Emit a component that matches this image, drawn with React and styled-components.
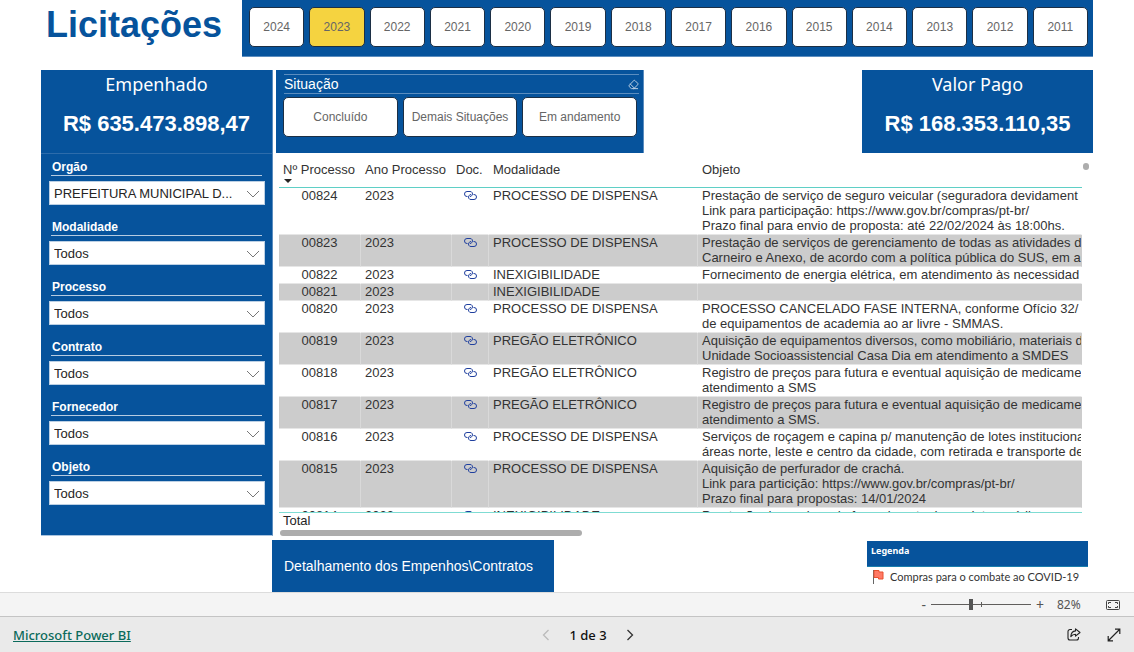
import React, { useState } from 'react';
import styled, { createGlobalStyle } from 'styled-components';
import { Eraser } from 'lucide-react';

const blue = '#06539c';
const arial = '"Liberation Sans", Arial, sans-serif';
const segoe = '"Noto Sans", "Segoe UI", sans-serif';

const GlobalStyle = createGlobalStyle`
  * { box-sizing: border-box; }
  body { margin: 0; background: #fff; font-family: ${arial}; color: #333; }
  button, select, input { font-family: inherit; margin: 0; }
`;

const Page = styled.div`
  display: flex;
  flex-direction: column;
  min-height: 100vh;
`;

const Report = styled.main`
  flex: 1;
`;

const Header = styled.header`
  display: flex;
  padding: 0 41px 0 46px;
`;

const Title = styled.h1`
  width: 196px;
  margin: 0;
  padding-top: 4px;
  font-size: 36px;
  line-height: 41px;
  color: ${blue};
`;

const YearBar = styled.div`
  flex: 1;
  display: flex;
  gap: 5px;
  padding: 7px 5px 9px 7px;
  background: ${blue};
  border-bottom: 1px solid #5b8dbf;
`;

const Tile = styled.button`
  flex: 1;
  min-width: 0;
  height: 40px;
  padding: 0;
  border: 1px solid #1c2f45;
  border-radius: 5px;
  background: ${(props) => (props.$active ? '#f5d340' : '#fff')};
  color: #666;
  font-size: 12px;
  white-space: nowrap;
  cursor: pointer;
`;

const Body = styled.div`
  display: grid;
  grid-template-columns: 232px minmax(0, 1fr);
  gap: 3px;
  padding: 13px 41px 4px;
`;

const Sidebar = styled.aside`
  background: ${blue};
  border-right: 1px solid #5b8dbf;
  border-bottom: 1px solid #a9c4df;
`;

const Card = styled.section`
  width: ${(props) => props.$width || 'auto'};
  height: 83px;
  background: ${blue};
  color: #fff;
  text-align: center;
`;

const CardLabel = styled.h2`
  margin: 0;
  padding-top: 2px;
  font: 400 18px/24px ${segoe};
`;

const CardValue = styled.div`
  padding-top: 15px;
  font-size: 22px;
  line-height: 26px;
  font-weight: bold;
`;

const Filters = styled.div`
  display: flex;
  flex-direction: column;
  gap: 15px;
  padding: 6px 7px 0 8px;
  border-top: 1px solid #2d6cab;
`;

const FilterLabel = styled.label`
  display: block;
  height: 16px;
  margin: 0 3px 5px 2px;
  padding-left: 1px;
  border-bottom: 1px solid #b5cbe1;
  color: #fff;
  font-size: 12px;
  line-height: 14px;
  font-weight: bold;
`;

const SelectBox = styled.div`
  position: relative;

  svg {
    position: absolute;
    right: 5px;
    top: 9px;
    pointer-events: none;
  }
`;

const Select = styled.select`
  display: block;
  width: 100%;
  height: 24px;
  padding: 0 24px 0 4px;
  appearance: none;
  border: 1px solid #bcd0e4;
  border-radius: 0;
  background: #fff;
  color: #252423;
  font-size: 13px;
`;

const Content = styled.div`
  display: flex;
  flex-direction: column;
  min-width: 0;
`;

const TopRow = styled.div`
  display: flex;
  justify-content: space-between;
`;

const Situation = styled.section`
  width: 368px;
  height: 83px;
  padding: 4px 4px 0 7px;
  background: ${blue};
  border-right: 1px solid #5b8dbf;
`;

const SituationHead = styled.div`
  display: flex;
  justify-content: space-between;
  height: 20px;
  margin-left: 1px;
  border-top: 1px solid #5b8dbf;
  border-bottom: 1px solid #5b8dbf;
`;

const SituationTitle = styled.h2`
  margin: 0;
  color: #fff;
  font-size: 14px;
  line-height: 19px;
  font-weight: 400;
`;

const IconButton = styled.button`
  display: flex;
  align-items: center;
  justify-content: center;
  padding: 0;
  border: 0;
  background: none;
  color: ${(props) => props.$color || '#333'};
  cursor: pointer;
`;

const Tiles = styled.div`
  display: flex;
  gap: 5px;
  padding: 3px 2px 0 0;
`;

const TableArea = styled.div`
  display: flex;
  align-items: flex-start;
  gap: 1px;
  padding: 1px 4px 0 3px;
`;

const TableBox = styled.div`
  flex: 1;
  min-width: 0;
`;

const TableView = styled.div`
  height: 359px;
  overflow: hidden;
  border-bottom: 1px solid #7fdcd3;
`;

const Table = styled.table`
  width: 100%;
  table-layout: fixed;
  border-collapse: separate;
  border-spacing: 0;
  font-size: 13px;
  line-height: 15px;
`;

const Th = styled.th`
  width: ${(props) => props.$width || 'auto'};
  height: 34px;
  padding: 8px 0 0 4px;
  border-bottom: 1px solid #5fcfc6;
  font-weight: 400;
  text-align: left;
  vertical-align: top;
  white-space: nowrap;
`;

const SortArrow = styled.svg`
  display: block;
  margin: 2px 0 0 1px;
`;

const Tr = styled.tr`
  background: ${(props) => (props.$shade ? '#ccc' : '#fff')};
`;

const Td = styled.td`
  height: 17px;
  padding: 0 ${(props) => (props.$center ? '4px' : '0')} 1px 4px;
  border-bottom: 1px solid #e6e6e6;
  border-right: 1px solid ${(props) => (props.$last ? 'transparent' : props.$shade ? '#d9d9d9' : '#fff')};
  overflow: hidden;
  text-align: ${(props) => (props.$center ? 'center' : 'left')};
  vertical-align: top;
  white-space: pre;
`;

const DocLink = styled.a`
  display: inline-block;
  color: #1f3f9e;

  svg { display: block; margin-top: 3px; }
`;

const Total = styled.div`
  padding-left: 4px;
  font-size: 13px;
  line-height: 15px;
  color: #252423;
`;

const HorizontalBar = styled.div`
  width: 302px;
  height: 6px;
  margin: 2px 0 0 1px;
  border-radius: 3px;
  background: #adadad;
`;

const ScrollDot = styled.div`
  width: 6px;
  height: 7px;
  margin-top: 9px;
  border-radius: 3px;
  background: #adadad;
`;

const BottomRow = styled.div`
  display: flex;
  justify-content: space-between;
  padding: 0 46px 0 272px;
`;

const DetailButton = styled.button`
  width: 282px;
  height: 52px;
  padding: 0 0 0 12px;
  border: 0;
  background: ${blue};
  color: #fff;
  font-size: 14px;
  text-align: left;
  cursor: pointer;
`;

const Legend = styled.section`
  width: 221px;
  padding-top: 1px;
`;

const LegendTitle = styled.h2`
  height: 26px;
  margin: 0;
  padding: 3px 4px;
  background: ${blue};
  border-bottom: 1px solid #1a7fae;
  color: #fff;
  font: 700 9px/13px ${segoe};
`;

const LegendItem = styled.div`
  display: flex;
  align-items: center;
  gap: 6px;
  padding: 2px 0 0 5px;
  font: 400 11px/16px Lato, sans-serif;
  white-space: nowrap;
`;

const ZoomBar = styled.div`
  display: flex;
  align-items: center;
  justify-content: flex-end;
  height: 24px;
  padding-right: 14px;
  border-top: 1px solid #dcdcdc;
  background: #f4f4f4;
  color: #555;
  font: 400 12px/16px ${segoe};
`;

const ZoomSign = styled.span`
  font-size: 14px;
`;

const ZoomSlider = styled.input`
  && {
    width: 100px;
    height: 13px;
    margin: 0 5px;
  }
  appearance: none;
  background:
    linear-gradient(#605e5c, #605e5c) 50px 4px / 1px 5px no-repeat,
    linear-gradient(#605e5c, #605e5c) 0 6px / 100% 1px no-repeat;

  &::-webkit-slider-thumb {
    appearance: none;
    width: 4px;
    height: 11px;
    background: #555;
  }
`;

const ZoomValue = styled.span`
  width: 49px;
  padding-left: 13px;
  margin-right: 13px;
`;

const Footer = styled.footer`
  display: grid;
  grid-template-columns: 1fr auto 1fr;
  align-items: center;
  height: 36px;
  padding: 0 13px;
  border-top: 1px solid #c4c4c4;
  background: #eaeaea;
  font: 500 13px/18px ${segoe};
`;

const BrandLink = styled.a`
  justify-self: start;
  color: #0b6a5b;
  text-decoration: underline;
`;

const Pager = styled.nav`
  display: flex;
  align-items: center;
  gap: 19px;
  padding-left: 42px;
  color: #111;
`;

const Actions = styled.div`
  display: flex;
  justify-content: flex-end;
  gap: 26px;
`;

const years = [2024, 2023, 2022, 2021, 2020, 2019, 2018, 2017, 2016, 2015, 2014, 2013, 2012, 2011];

const filters = [
  { id: 'orgao', name: 'Orgão', value: 'PREFEITURA MUNICIPAL D...' },
  { id: 'modalidade', name: 'Modalidade', value: 'Todos' },
  { id: 'processo', name: 'Processo', value: 'Todos' },
  { id: 'contrato', name: 'Contrato', value: 'Todos' },
  { id: 'fornecedor', name: 'Fornecedor', value: 'Todos' },
  { id: 'objeto', name: 'Objeto', value: 'Todos' },
];

const rows = [
  {
    id: '00824', type: 'PROCESSO DE DISPENSA', doc: true,
    text: 'Prestação de serviço de seguro veicular (seguradora devidament\nLink para participação: https://www.gov.br/compras/pt-br/\nPrazo final para envio de proposta: até 22/02/2024 às 18:00hs.',
  },
  {
    id: '00823', type: 'PROCESSO DE DISPENSA', doc: true,
    text: 'Prestação de serviços de gerenciamento de todas as atividades d\nCarneiro e Anexo, de acordo com a política pública do SUS, em a',
  },
  { id: '00822', type: 'INEXIGIBILIDADE', doc: true, text: 'Fornecimento de energia elétrica, em atendimento às necessidad' },
  { id: '00821', type: 'INEXIGIBILIDADE', doc: false, text: '' },
  {
    id: '00820', type: 'PROCESSO DE DISPENSA', doc: true,
    text: 'PROCESSO CANCELADO FASE INTERNA, conforme Ofício 32/\nde equipamentos de academia ao ar livre - SMMAS.',
  },
  {
    id: '00819', type: 'PREGÃO ELETRÔNICO', doc: true,
    text: 'Aquisição de equipamentos diversos, como mobiliário, materiais d\nUnidade Socioassistencial Casa Dia em atendimento a SMDES',
  },
  {
    id: '00818', type: 'PREGÃO ELETRÔNICO', doc: true,
    text: 'Registro de preços para futura e eventual aquisição de medicame\natendimento a SMS',
  },
  {
    id: '00817', type: 'PREGÃO ELETRÔNICO', doc: true,
    text: 'Registro de preços para futura e eventual aquisição de medicame\natendimento a SMS.',
  },
  {
    id: '00816', type: 'PROCESSO DE DISPENSA', doc: true,
    text: 'Serviços de roçagem e capina p/ manutenção de lotes instituciona\náreas norte, leste e centro da cidade, com retirada e transporte de',
  },
  {
    id: '00815', type: 'PROCESSO DE DISPENSA', doc: true,
    text: 'Aquisição de perfurador de crachá.\nLink para particição: https://www.gov.br/compras/pt-br/\nPrazo final para propostas: 14/01/2024',
  },
  { id: '00814', type: 'INEXIGIBILIDADE', doc: true, text: 'Prestação de serviços de fornecimento de produtos médicos' },
];

const Chevron = () => (
  <svg width="14" height="8" viewBox="0 0 14 8" fill="none" stroke="#777" strokeWidth="1">
    <path d="M1 1l6 6 6-6" />
  </svg>
);

const ChainIcon = () => (
  <svg width="13" height="9" viewBox="0 0 13 9" fill="none" stroke="currentColor" strokeWidth="1">
    <path d="M3.500 5.500H3A2.500 2.500 0 0 1 3 .5H6A2.300 2.300 0 0 1 8 4.200Q7.500 5.500 6 5.500" />
    <path d="M9.500 3.500H10A2.500 2.500 0 0 1 10 8.500H7A2.300 2.300 0 0 1 5 4.800Q5.500 3.500 7 3.500" />
  </svg>
);

const FlagIcon = () => (
  <svg width="12" height="14" viewBox="0 0 12 14">
    <path d="M1.5 0v14" stroke="#666" strokeWidth="1" />
    <path d="M2 .5h5v1.5h4v7H6.5V7.500H2z" fill="#ff7a66" stroke="#e8502f" strokeWidth="1" />
  </svg>
);

const FitIcon = () => (
  <svg width="14" height="10" viewBox="0 0 14 10" fill="none" stroke="currentColor" strokeWidth="1">
    <rect x=".5" y=".5" width="13" height="9" rx="1" />
    <path d="M5 2.500H2.500V4M2.500 6v1.500H5M9 2.500h2.500V4M11.500 6v1.500H9" />
  </svg>
);

const ShareIcon = () => (
  <svg width="14" height="13" viewBox="0 0 14 13" fill="none" stroke="currentColor" strokeWidth="1.1" strokeLinejoin="round">
    <path d="M5 1.500H3A2 2 0 0 0 1 3.500V10a2 2 0 0 0 2 2h6.500a2 2 0 0 0 2-2V9" />
    <path d="M8.500 .8L13 4.500 8.500 8.200V6.200C6.300 6.200 5 7 3.800 8.600 4 5.500 5.600 3.200 8.500 2.900z" />
  </svg>
);

const ExpandIcon = () => (
  <svg width="14" height="14" viewBox="0 0 14 14" fill="none" stroke="currentColor" strokeWidth="1.200">
    <path d="M1.500 12.500l11-11M8 1.200h4.800V6M1.200 8v4.800H6" />
  </svg>
);

const PageArrow = ({ d }) => (
  <svg width="8" height="12" viewBox="0 0 8 12" fill="none" stroke="currentColor" strokeWidth="1.300">
    <path d={d} />
  </svg>
);

function App() {
  const [year, setYear] = useState(2023);
  const [zoom, setZoom] = useState(82);

  return (
    <Page>
      <GlobalStyle />
      <Report>
        <Header>
          <Title>Licitações</Title>
          <YearBar>
            {years.map((y) => (
              <Tile key={y} $active={y === year} onClick={() => setYear(y)}>{y}</Tile>
            ))}
          </YearBar>
        </Header>

        <Body>
          <Sidebar>
            <Card>
              <CardLabel>Empenhado</CardLabel>
              <CardValue>R$ 635.473.898,47</CardValue>
            </Card>
            <Filters>
              {filters.map((f) => (
                <div key={f.id}>
                  <FilterLabel htmlFor={f.id}>{f.name}</FilterLabel>
                  <SelectBox>
                    <Select id={f.id}>
                      <option>{f.value}</option>
                    </Select>
                    <Chevron />
                  </SelectBox>
                </div>
              ))}
            </Filters>
          </Sidebar>

          <Content>
            <TopRow>
              <Situation>
                <SituationHead>
                  <SituationTitle>Situação</SituationTitle>
                  <IconButton $color="#c8d8e8" aria-label="Limpar seleções">
                    <Eraser size={11} strokeWidth={2} />
                  </IconButton>
                </SituationHead>
                <Tiles>
                  <Tile>Concluído</Tile>
                  <Tile>Demais Situações</Tile>
                  <Tile>Em andamento</Tile>
                </Tiles>
              </Situation>
              <Card $width="231px">
                <CardLabel>Valor Pago</CardLabel>
                <CardValue>R$ 168.353.110,35</CardValue>
              </Card>
            </TopRow>

            <TableArea>
              <TableBox>
                <TableView>
                  <Table>
                    <thead>
                      <tr>
                        <Th $width="82px">
                          Nº Processo
                          <SortArrow width="8" height="4" viewBox="0 0 8 4">
                            <path d="M0 0h8L4 4z" fill="#252423" />
                          </SortArrow>
                        </Th>
                        <Th $width="91px">Ano Processo</Th>
                        <Th $width="37px">Doc.</Th>
                        <Th $width="209px">Modalidade</Th>
                        <Th>Objeto</Th>
                      </tr>
                    </thead>
                    <tbody>
                      {rows.map((row, i) => {
                        const shade = i % 2 === 1;
                        return (
                          <Tr key={row.id} $shade={shade}>
                            <Td $shade={shade} $center>{row.id}</Td>
                            <Td $shade={shade}>2023</Td>
                            <Td $shade={shade} $center>
                              {row.doc && (
                                <DocLink href="#" aria-label={'Documento ' + row.id}><ChainIcon /></DocLink>
                              )}
                            </Td>
                            <Td $shade={shade}>{row.type}</Td>
                            <Td $shade={shade} $last>{row.text}</Td>
                          </Tr>
                        );
                      })}
                    </tbody>
                  </Table>
                </TableView>
                <Total>Total</Total>
                <HorizontalBar />
              </TableBox>
              <ScrollDot />
            </TableArea>
          </Content>
        </Body>

        <BottomRow>
          <DetailButton>Detalhamento dos Empenhos\Contratos</DetailButton>
          <Legend>
            <LegendTitle>Legenda</LegendTitle>
            <LegendItem>
              <FlagIcon />
              Compras para o combate ao COVID-19
            </LegendItem>
          </Legend>
        </BottomRow>
      </Report>

      <ZoomBar>
        <ZoomSign>-</ZoomSign>
        <ZoomSlider
          type="range"
          min="0"
          max="205"
          value={zoom}
          aria-label="Zoom"
          onChange={(e) => setZoom(Number(e.target.value))}
        />
        <ZoomSign>+</ZoomSign>
        <ZoomValue>{zoom}%</ZoomValue>
        <IconButton $color="#444" aria-label="Ajustar à página"><FitIcon /></IconButton>
      </ZoomBar>

      <Footer>
        <BrandLink href="#">Microsoft Power BI</BrandLink>
        <Pager>
          <IconButton $color="#bbb" aria-label="Página anterior"><PageArrow d="M6.500 1l-5 5 5 5" /></IconButton>
          <span>1 de 3</span>
          <IconButton aria-label="Próxima página"><PageArrow d="M1.500 1l5 5-5 5" /></IconButton>
        </Pager>
        <Actions>
          <IconButton $color="#222" aria-label="Compartilhar"><ShareIcon /></IconButton>
          <IconButton $color="#222" aria-label="Tela inteira"><ExpandIcon /></IconButton>
        </Actions>
      </Footer>
    </Page>
  );
}

export default App;
